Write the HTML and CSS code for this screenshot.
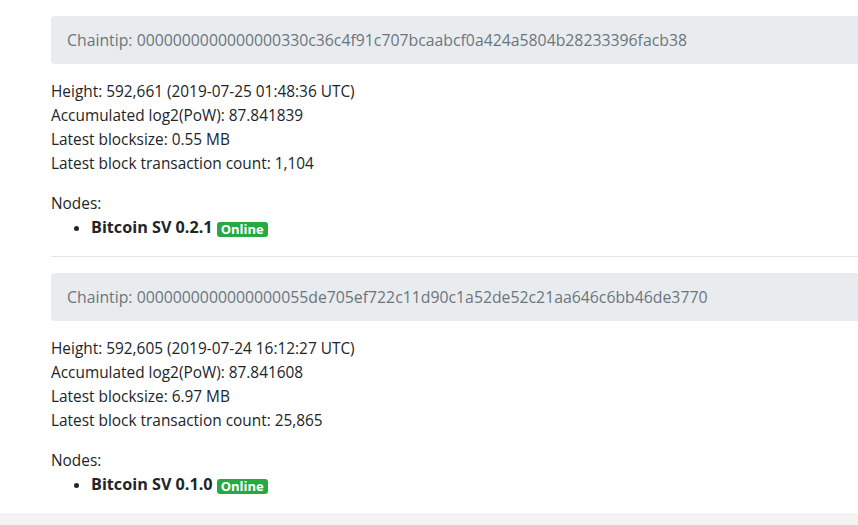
FILE: index.html
```html
<!DOCTYPE html>
<html>
<head>
<meta charset="utf-8">
<link rel="stylesheet" href="styles.css">
</head>
<body>
<main class="page">
  <section class="tip">
    <div class="chaintip">Chaintip: 0000000000000000330c36c4f91c707bcaabcf0a424a5804b28233396facb38</div>
    <p class="stats">Height: 592,661 (2019-07-25 01:48:36 UTC)<br>Accumulated log2(PoW): 87.841839<br>Latest blocksize: 0.55 MB<br>Latest block transaction count: 1,104</p>
    <p class="nodes-label">Nodes:</p>
    <ul class="nodes">
      <li><strong>Bitcoin SV 0.2.1</strong> <span class="badge">Online</span></li>
    </ul>
  </section>
  <hr class="divider">
  <section class="tip">
    <div class="chaintip">Chaintip: 0000000000000000055de705ef722c11d90c1a52de52c21aa646c6bb46de3770</div>
    <p class="stats">Height: 592,605 (2019-07-24 16:12:27 UTC)<br>Accumulated log2(PoW): 87.841608<br>Latest blocksize: 6.97 MB<br>Latest block transaction count: 25,865</p>
    <p class="nodes-label">Nodes:</p>
    <ul class="nodes">
      <li><strong>Bitcoin SV 0.1.0</strong> <span class="badge">Online</span></li>
    </ul>
  </section>
</main>
<footer class="footer"></footer>
</body>
</html>
```
FILE: styles.css
```css
html, body {
  margin: 0;
  padding: 0;
  overflow: hidden;
}
body {
  font-family: "Open Sans", "Noto Sans", sans-serif;
  font-size: 15.4px;
  line-height: 24px;
  color: #212529;
  background: #fff;
  width: 858px;
  height: 525px;
}
.page {
  padding: 16px 0 0 51px;
  width: 1000px;
}
.chaintip {
  background: #e9ecef;
  color: #6c757d;
  font-size: 15.8px;
  border-radius: 4px;
  padding: 12px 16px;
  white-space: nowrap;
}
.stats {
  margin: 16px 0 0 0;
}
.nodes-label {
  margin: 16px 0 0 0;
}
.nodes {
  margin: 0 0 16px 0;
  padding-left: 40px;
}
.nodes li {
  height: 24px;
}
.nodes strong {
  font-weight: 700;
  font-size: 16.2px;
  line-height: 1;
}
.badge {
  display: inline-block;
  background: #28a745;
  color: #fff;
  font-size: 13px;
  font-weight: 700;
  line-height: 15px;
  padding: 0 4px;
  border-radius: 3px;
  vertical-align: -1px;
}
.divider {
  border: 0;
  border-top: 1px solid #e5e5e5;
  margin: 0 0 16px 0;
}
.footer {
  background: #f3f3f3;
  height: 40px;
}
```
